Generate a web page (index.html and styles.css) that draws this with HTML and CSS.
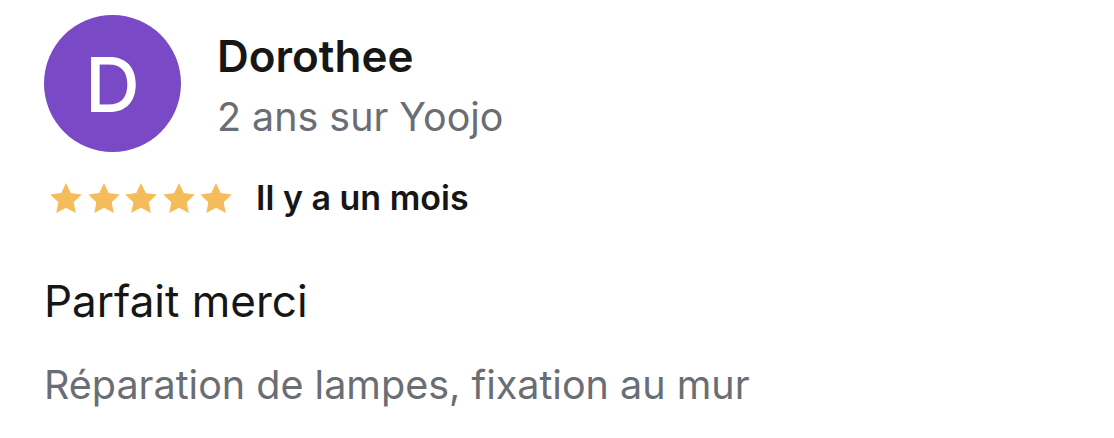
FILE: index.html
```html
<!DOCTYPE html>
<html lang="fr">

<head>
  <meta charset="UTF-8">
  <meta name="viewport" content="width=device-width, initial-scale=1.0">
  <title>avis</title>
  <link rel="stylesheet" href="styles.css">
</head>

<body>
  <article class="review">
    <header class="review-head">
      <div class="avatar">D</div>
      <div class="author">
        <div class="name">Dorothee</div>
        <div class="since">2 ans sur Yoojo</div>
      </div>
    </header>

    <div class="rating">
      <div class="stars">
        <svg class="star" viewBox="1.7 1.8 20.6 19.6"><path d="M12 1.8l3.1 6.6 7.2.9-5.3 5 1.4 7.1L12 17.9l-6.4 3.5L7 14.3l-5.3-5 7.2-.9z"/></svg>
        <svg class="star" viewBox="1.7 1.8 20.6 19.6"><path d="M12 1.8l3.1 6.6 7.2.9-5.3 5 1.4 7.1L12 17.9l-6.4 3.5L7 14.3l-5.3-5 7.2-.9z"/></svg>
        <svg class="star" viewBox="1.7 1.8 20.6 19.6"><path d="M12 1.8l3.1 6.6 7.2.9-5.3 5 1.4 7.1L12 17.9l-6.4 3.5L7 14.3l-5.3-5 7.2-.9z"/></svg>
        <svg class="star" viewBox="1.7 1.8 20.6 19.6"><path d="M12 1.8l3.1 6.6 7.2.9-5.3 5 1.4 7.1L12 17.9l-6.4 3.5L7 14.3l-5.3-5 7.2-.9z"/></svg>
        <svg class="star" viewBox="1.7 1.8 20.6 19.6"><path d="M12 1.8l3.1 6.6 7.2.9-5.3 5 1.4 7.1L12 17.9l-6.4 3.5L7 14.3l-5.3-5 7.2-.9z"/></svg>
      </div>
      <time class="date">Il y a un mois</time>
    </div>

    <p class="title">Parfait merci</p>
    <p class="service">Réparation de lampes, fixation au mur</p>
  </article>
</body>

</html>
```

FILE: styles.css
```css
body {
  margin: 0;
  background: #fff;
  font-family: Inter, "Noto Sans", sans-serif;
}

.review {
  padding: 15px 0 0 44px;
}

.review-head {
  display: flex;
  align-items: flex-start;
  gap: 36px;
}

.avatar {
  flex: none;
  width: 137px;
  height: 137px;
  border-radius: 50%;
  background: #7a49c5;
  color: #fff;
  font-size: 76px;
  font-weight: 500;
  display: grid;
  place-items: center;
}

.author {
  padding-top: 15px;
}

.name {
  font-size: 44px;
  font-weight: 600;
  line-height: 52px;
  color: #161616;
}

.since {
  margin-top: 11px;
  font-size: 39.4px;
  line-height: 48px;
  color: #6a6d73;
}

.rating {
  display: flex;
  align-items: center;
  gap: 24px;
  margin-top: 25px;
  padding-left: 6px;
}

.stars {
  display: flex;
  gap: 5.5px;
}

.star {
  width: 32px;
  height: 30px;
  fill: #f5bc5b;
}

.date {
  font-size: 34px;
  font-weight: 600;
  line-height: 41px;
  color: #161616;
}

.title {
  margin: 57px 0 0;
  font-size: 44px;
  line-height: 53px;
  color: #161616;
}

.service {
  margin: 33px 0 0;
  font-size: 39.5px;
  line-height: 48px;
  color: #6a6d73;
}
```
